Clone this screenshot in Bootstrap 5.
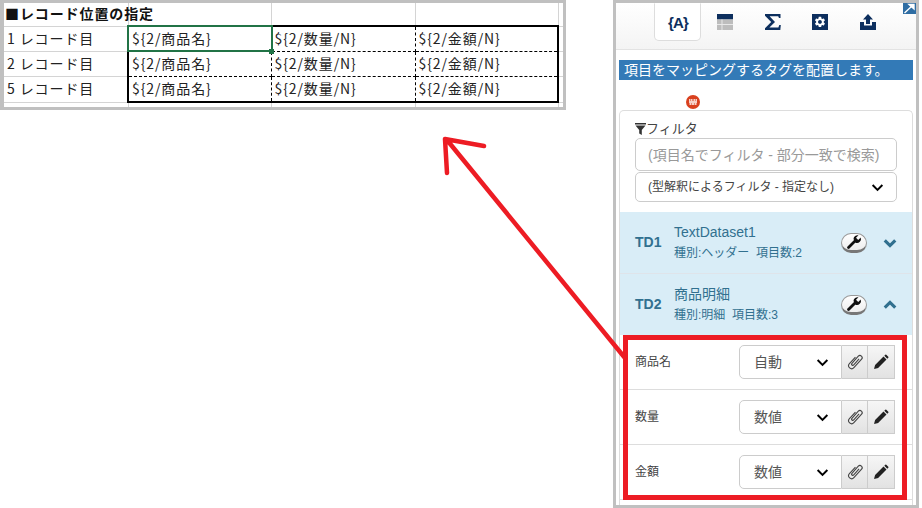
<!doctype html>
<html lang="ja">
<head>
<meta charset="utf-8">
<title>マッピング</title>
<link href="https://cdn.jsdelivr.net/npm/bootstrap@5.3.0/dist/css/bootstrap.min.css" rel="stylesheet">
<style>
html,body{margin:0;height:508px;overflow:hidden;background:#fff}
body{position:relative;font-family:"Liberation Sans","Noto Sans CJK JP",sans-serif;color:#333}
.canvas{height:508px;padding-right:3px}
/* sheet */
.sheet{width:566px;height:110px;border:solid #c0c0c0;border-width:3px 3px 3px 4px;overflow:hidden;font-family:"Noto Sans CJK JP",sans-serif;font-size:14px;color:#222;letter-spacing:.9px}
.sheet table{table-layout:fixed;border-collapse:collapse;width:559px}
.sheet td{border:1px solid #d4d4d4;padding:0 0 2px 3px;white-space:nowrap;line-height:20px;overflow:visible}
.sheet tr>td:first-child{border-left:0}
.sheet tr:first-child td{border-top:0}
.rw-t{height:23px}.rw-a{height:25px}.rw-b{height:26px}.rw-e{height:5px}
.sheet td.ttl{font-weight:700;color:#111;padding-left:1px}
.sheet td.dr{border-right:1px dashed #000}
.sheet td.db{border-bottom:1px dashed #000}
.sheet td.dl{border-left:1px dashed #000}
.sheet td.dt{border-top:1px dashed #000}
.sheet td.cl{border-left:2px solid #000}
.sheet td.cr{border-right:2px solid #000}
.sheet td.ct{border-top:2px solid #000}
.sheet td.cb{border-bottom:2px solid #000}
.sel{position:relative}
.sel-box{position:absolute;left:-2px;top:-2px;right:-2px;bottom:-1px;border:2px solid #217346}
.sel-h{position:absolute;right:-3px;bottom:-3px;width:5px;height:5px;background:#217346}
/* panel */
.panel-w{width:306px;height:508px;border:3px solid #c0c0c0}
.tabbar{height:47px;background:linear-gradient(#fff,#f4f4f4);border-bottom:1px solid #e3e3e3;position:relative;padding-left:38px}
.tabi{width:47.5px;height:38px;display:flex;align-items:center;justify-content:center;border:1px solid transparent;padding-left:1px}
.tabi.on{background:#fff;border-color:transparent #ddd #ddd #ddd;border-radius:0 0 5px 5px;width:47px}
.brace{font:700 15px "Liberation Sans",sans-serif;color:#0d2f5e;letter-spacing:-.8px}
.cornr{position:absolute;right:0;top:0;width:13px;height:11px;display:block}
.msg{margin:10px 3px 0;height:20px;background:#337ab7;color:#fff;font-size:14px;line-height:20px;padding-left:5px;white-space:nowrap}
.dot-w{height:30px;padding:15px 0 0 70px}
.cardx{margin:0 3px;border:1px solid #ddd;border-radius:5px 5px 0 0;border-bottom:0;height:395px}
.filt{height:101px;padding:9px 15px 0 15px}
.filt-l{font-size:13px;line-height:16px;height:18px;color:#444}
.filt input.form-control{height:33px;padding:0 12px;font-size:14px;border-radius:5px;border-color:#ccc}
.filt input::placeholder{color:#999}
.filt .form-select{height:30px;margin-top:1px;font-size:12px;padding:0 12px;color:#444;border-radius:5px;border-color:#ccc;background-image:none}
.selw{position:relative}
.caret{position:absolute;right:13px;top:50%;margin-top:-4px;pointer-events:none;display:block}
.tdrow{height:62px;background:#d9edf7;border-bottom:1px solid #dfe4ea;color:#31708f;padding-left:15px;padding-right:15px}
.tdrow.lastr{height:61px;border-bottom:0}
.tdk{width:39px;font-size:14px;font-weight:700}
.tdt{font-size:14px;line-height:19px}
.tds{font-size:12px;line-height:17px;margin-top:3px}
.pill{width:26px;height:20px;border-radius:10px;background:linear-gradient(#fff,#eee);border:1px solid #999;border-bottom:3px solid #777;display:flex;align-items:center;justify-content:center;padding:0}
.fieldr{height:55px;padding:0 17px 0 15px;border-bottom:1px solid #ddd;font-size:12px;color:#444}
.fieldr .selw{width:103px}
.fieldr .form-select{height:34px;font-size:14px;padding:0 14px;color:#555;border-radius:5px 0 0 5px;border-color:#ccc;background-image:none}
.bx{width:27px;height:34px;padding:0;border:1px solid #ccc;border-left:0;border-radius:0;background:linear-gradient(#f6f6f6,#e2e2e2);display:flex;align-items:center;justify-content:center}
.bx.first{width:26px}
.overlay{position:absolute;left:0;top:0;pointer-events:none}
</style>
</head>
<body>
<svg width="0" height="0" class="position-absolute">
  <defs>
    <symbol id="chev" viewBox="0 0 16 10"><path d="M2 2l6 6 6-6" fill="none" stroke="currentColor" stroke-width="2.400"/></symbol>
    <symbol id="chevb" viewBox="0 0 16 10"><path d="M2 2l6 6 6-6" fill="none" stroke="currentColor" stroke-width="3.600"/></symbol>
    <symbol id="wrench" viewBox="0 0 16 16"><path d="M2.500 13.500L9 7" stroke="#111" stroke-width="2.800" stroke-linecap="round" fill="none"/><path d="M7.500 5a4 4 0 0 1 5-3.700L10 3.800l2.200 2.200L14.700 3.500a4 4 0 0 1-5.200 5.200z" fill="#111"/></symbol>
    <symbol id="clip" viewBox="0 0 16 16"><g transform="rotate(42 8 8)" fill="none" stroke="#444" stroke-width="1.100"><path d="M5 4V13a3 3 0 0 0 6 0V1.500a2.200 2.200 0 0 0-4.400 0V11a1.200 1.200 0 0 0 2.400 0V3"/></g></symbol>
    <symbol id="pencil" viewBox="0 0 16 16"><path d="M1 15l1.100-4.100L10.500 2.500l3 3L5.100 13.900zM11.300 1.700l1-1q.5-.4 1 0l2 2q.4.500 0 1l-1 1z" fill="#222"/></symbol>
  </defs>
</svg>

<div class="canvas d-flex justify-content-between align-items-start">
  <div class="sheet">
    <table>
      <colgroup><col style="width:124px"><col style="width:143px"><col style="width:144px"><col style="width:143px"><col style="width:5px"></colgroup>
      <tr class="rw-t"><td class="ttl">■レコード位置の指定</td><td></td><td></td><td></td><td></td></tr>
      <tr class="rw-a"><td>1 レコード目</td><td class="cl ct dr db sel"><span class="sel-box"></span><span class="sel-h"></span>${2/商品名}</td><td class="ct dl dr db">${2/数量/N}</td><td class="ct cr dl db">${2/金額/N}</td><td class="cl"></td></tr>
      <tr class="rw-a"><td>2 レコード目</td><td class="cl dt dr db">${2/商品名}</td><td class="dl dr dt db">${2/数量/N}</td><td class="cr dl dt db">${2/金額/N}</td><td class="cl"></td></tr>
      <tr class="rw-b"><td>5 レコード目</td><td class="cl dt dr cb">${2/商品名}</td><td class="dl dr dt cb">${2/数量/N}</td><td class="cr dl dt cb">${2/金額/N}</td><td class="cl"></td></tr>
      <tr class="rw-e"><td></td><td></td><td></td><td></td><td></td></tr>
    </table>
  </div>

  <div class="panel-w d-flex flex-column">
    <div class="tabbar d-flex align-items-start">
      <div class="tabi on"><span class="brace">{A}</span></div>
      <div class="tabi"><svg width="16" height="16" viewBox="0 0 16 16"><rect width="16" height="5.500" fill="#0d2f5e"/><rect y="5.500" width="16" height="10.500" fill="#bdbdbd"/><path d="M0 10.500h16M5 5.500v10.500" stroke="#e8e8e8" stroke-width="1"/></svg></div>
      <div class="tabi"><svg width="16" height="16" viewBox="0 0 16 16"><path d="M0 0h15.500v4h-1.500l-.8-1.800H4.600L10 8l-5.600 5.600h9L14.300 11h1.500l-.5 5H0v-1.800L6.200 8 0 1.800z" fill="#0d2f5e"/></svg></div>
      <div class="tabi"><svg width="16" height="16" viewBox="0 0 16 16"><rect width="16" height="16" fill="#0d2f5e"/><path transform="translate(1.600 1.600) scale(.53)" d="M19.140 12.940c.04-.3.06-.61.06-.94 0-.32-.02-.64-.07-.94l2.030-1.580c.18-.14.23-.41.12-.61l-1.920-3.320c-.12-.22-.37-.29-.59-.22l-2.390.96c-.5-.38-1.030-.7-1.620-.94l-.36-2.540c-.04-.24-.24-.41-.48-.41h-3.840c-.24 0-.43.17-.47.41l-.36 2.540c-.59.24-1.130.57-1.620.94l-2.390-.96c-.22-.08-.47 0-.59.22L2.740 8.870c-.12.21-.08.47.12.61l2.030 1.580c-.05.3-.09.63-.09.94s.02.64.07.94l-2.030 1.580c-.18.14-.23.41-.12.61l1.920 3.320c.12.22.37.29.59.22l2.390-.96c.5.38 1.030.7 1.620.94l.36 2.540c.05.24.24.41.48.41h3.840c.24 0 .44-.17.47-.41l.36-2.540c.59-.24 1.130-.56 1.620-.94l2.390.96c.22.08.47 0 .59-.22l1.920-3.320c.12-.22.07-.47-.12-.61l-2.010-1.580zM12 15.600c-1.980 0-3.600-1.620-3.600-3.600s1.620-3.600 3.600-3.600 3.600 1.620 3.600 3.600-1.620 3.600-3.600 3.600z" fill="#fff"/></svg></div>
      <div class="tabi"><svg width="16" height="16" viewBox="0 0 16 16"><path d="M8 0l5 5.500h-3V10H6V5.500H3z" fill="#0d2f5e"/><path d="M0 8h4v3.600h8V8h4v8H0z" fill="#0d2f5e"/></svg></div>
      <svg class="cornr" viewBox="0 0 13 11"><rect width="13" height="11" fill="#2f6da3"/><path d="M1.500 10L9.500 2.500M6 1.500h5v4.500z" stroke="#fff" fill="#fff" stroke-width="1.400"/></svg>
    </div>
    <div class="msg">項目をマッピングするタグを配置します。</div>
    <div class="dot-w"><svg class="d-block" width="14" height="14" viewBox="0 0 14 14"><circle cx="7" cy="7" r="7" fill="#d9401e"/><path d="M3 5h1.500M5 5h1.500M7.500 5H9M9.500 5H11M3 7h8M3.500 9h2M6 9h2M8.500 9h2" stroke="#fff" stroke-width="1.300"/></svg></div>
    <div class="cardx">
      <div class="filt">
        <div class="filt-l d-flex align-items-center"><svg width="11" height="12" viewBox="0 0 11 12"><path d="M0 0h11v1.500H0zM.5 2.500h10L6.800 7v5L4.200 10.500V7z" fill="#333"/></svg>フィルタ</div>
        <input class="form-control" type="text" placeholder="(項目名でフィルタ - 部分一致で検索)">
        <div class="selw">
          <select class="form-select"><option>(型解釈によるフィルタ - 指定なし)</option></select>
          <svg class="caret text-black" width="13" height="9"><use href="#chev"/></svg>
        </div>
      </div>
      <div class="tdrow d-flex align-items-center">
        <div class="tdk">TD1</div>
        <div class="flex-grow-1"><div class="tdt">TextDataset1</div><div class="tds">種別:ヘッダー&nbsp; 項目数:2</div></div>
        <button class="pill" type="button"><svg width="16" height="16"><use href="#wrench"/></svg></button>
        <svg class="ms-3" width="14" height="10"><use href="#chevb"/></svg>
      </div>
      <div class="tdrow lastr d-flex align-items-center">
        <div class="tdk">TD2</div>
        <div class="flex-grow-1"><div class="tdt">商品明細</div><div class="tds">種別:明細&nbsp; 項目数:3</div></div>
        <button class="pill" type="button"><svg width="16" height="16"><use href="#wrench"/></svg></button>
        <svg class="ms-3" width="14" height="10" viewBox="0 0 16 10"><path d="M2 8l6-6 6 6" fill="none" stroke="currentColor" stroke-width="3.600"/></svg>
      </div>
      <div class="fieldr d-flex align-items-center">
        <div class="flex-grow-1">商品名</div>
        <div class="selw"><select class="form-select"><option>自動</option></select><svg class="caret text-black" width="13" height="9"><use href="#chev"/></svg></div>
        <button class="bx first" type="button"><svg width="16" height="16"><use href="#clip"/></svg></button>
        <button class="bx" type="button"><svg width="16" height="16"><use href="#pencil"/></svg></button>
      </div>
      <div class="fieldr d-flex align-items-center">
        <div class="flex-grow-1">数量</div>
        <div class="selw"><select class="form-select"><option>数値</option></select><svg class="caret text-black" width="13" height="9"><use href="#chev"/></svg></div>
        <button class="bx first" type="button"><svg width="16" height="16"><use href="#clip"/></svg></button>
        <button class="bx" type="button"><svg width="16" height="16"><use href="#pencil"/></svg></button>
      </div>
      <div class="fieldr d-flex align-items-center">
        <div class="flex-grow-1">金額</div>
        <div class="selw"><select class="form-select"><option>数値</option></select><svg class="caret text-black" width="13" height="9"><use href="#chev"/></svg></div>
        <button class="bx first" type="button"><svg width="16" height="16"><use href="#clip"/></svg></button>
        <button class="bx" type="button"><svg width="16" height="16"><use href="#pencil"/></svg></button>
      </div>
    </div>
  </div>
</div>

<svg class="overlay" width="922" height="508" viewBox="0 0 922 508">
  <g fill="none" stroke="#ed1c24">
    <rect x="625.500" y="337.500" width="279" height="160" stroke-width="5"/>
    <path d="M625 358L447 140M445 139L484 146M445 139L447 173" stroke-width="4.500" stroke-linecap="round"/>
  </g>
</svg>
</body>
</html>
